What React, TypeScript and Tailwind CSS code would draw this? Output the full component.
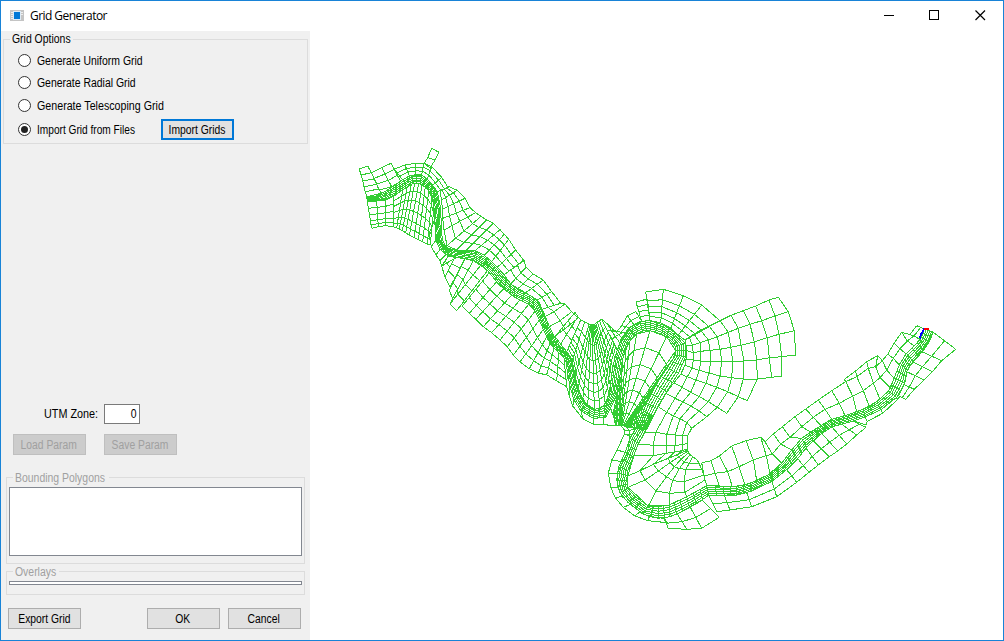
import React from "react";

type Pt = [number, number];
type Rung = Pt[];

/* ---------- mesh helpers ---------- */

const place = (ox: number, oy: number, [x, y]: Pt): Pt => [ox + x / 3, oy + y / 3];

const line = (pts: Pt[]) => "M" + pts.map(([x, y]) => x.toFixed(1) + " " + y.toFixed(1)).join("L");

// Rungs across the patch; nodes with the same index are joined lengthwise.
function grid(ox: number, oy: number, rungs: Rung[]): string {
  const rs = rungs.map((r) => r.map((p) => place(ox, oy, p)));
  let d = rs.map(line).join("");
  for (let i = 1; i < rs.length; i++) {
    const n = Math.min(rs[i].length, rs[i - 1].length);
    for (let j = 0; j < n; j++) d += line([rs[i - 1][j], rs[i][j]]);
  }
  return d;
}

// Straight rungs given as [bankX, bankY, outerX, outerY], split at the fractions.
function fan(ox: number, oy: number, fr: number[], rows: number[][], dense = 1): string {
  const all: number[][] = [];
  rows.forEach((r, i) => {
    all.push(r);
    const next = rows[i + 1];
    if (next) for (let k = 1; k < dense; k++) all.push(r.map((v, c) => v + ((next[c] - v) * k) / dense));
  });
  return grid(
    ox,
    oy,
    all.map(([a, b, c, e]) => fr.map((f): Pt => [a + (c - a) * f, b + (e - b) * f])),
  );
}

const even = (n: number) => Array.from({ length: n + 1 }, (_, i) => i / n);

/* ---------- channel ---------- */

const bed = even(5);

const channel = [
  fan(350, 140, bed, [
    [50, 170, 52, 185], [78, 168, 80, 183], [105, 155, 108, 178], [135, 135, 138, 163], [160, 118, 168, 143],
    [185, 105, 190, 130], [215, 105, 210, 130], [240, 125, 230, 143], [262, 155, 248, 168], [272, 205, 252, 205],
    [274, 260, 256, 260], [277, 300, 260, 305], [290, 323, 270, 328], [320, 333, 295, 347], [350, 333, 335, 354],
    [380, 337, 370, 360], [410, 357, 398, 376], [435, 380, 422, 403], [460, 410, 448, 435], [482, 432, 472, 455],
    [505, 450, 498, 474], [540, 466, 536, 493],
  ], 2),
  fan(430, 230, bed, [
    [300, 196, 296, 223], [327, 217, 310, 233], [342, 250, 328, 270], [356, 285, 344, 308], [372, 320, 360, 340],
    [388, 346, 380, 362], [412, 366, 400, 380], [426, 390, 408, 395], [432, 420, 412, 425], [440, 460, 420, 470],
    [452, 495, 432, 510],
  ], 2),
  fan(550, 280, bed, [
    [92, 345, 72, 360], [110, 373, 93, 393], [135, 388, 130, 415], [162, 378, 168, 412], [180, 335, 200, 345],
    [185, 285, 208, 300], [195, 230, 217, 240], [212, 180, 235, 190], [235, 145, 253, 165], [270, 124, 278, 153],
    [300, 122, 300, 152], [340, 135, 335, 162], [375, 158, 365, 185], [405, 190, 377, 200], [407, 230, 377, 225],
    [385, 280, 350, 265], [350, 335, 318, 315], [320, 385, 290, 368], [298, 430, 270, 420], [290, 450, 262, 445],
  ], 2),
  fan(590, 400, bed, [
    [185, 48, 158, 42], [165, 95, 140, 80], [145, 130, 120, 115], [130, 170, 105, 158], [113, 212, 86, 200],
    [110, 240, 80, 240], [114, 265, 90, 278], [135, 290, 115, 308], [175, 318, 160, 343], [205, 320, 205, 355],
    [237, 315, 240, 350], [270, 300, 278, 334], [310, 280, 318, 312], [350, 257, 356, 286], [400, 259, 403, 286],
    [440, 260, 438, 286], [480, 250, 485, 273], [540, 222, 546, 244],
  ], 2),
  fan(740, 310, bed, [
    [90, 490, 96, 514], [125, 460, 140, 479], [155, 420, 173, 446], [185, 385, 200, 412], [230, 355, 240, 374],
    [270, 330, 278, 349], [320, 315, 326, 337], [370, 298, 375, 321], [410, 275, 423, 299], [446, 243, 470, 262],
    [462, 205, 494, 220], [480, 160, 502, 180], [500, 130, 520, 155], [532, 98, 550, 122], [545, 82, 568, 95],
    [553, 57, 580, 67],
  ], 2),
].join("");

/* ---------- left overbank ---------- */

const leftBank = [
  grid(350, 140, [
    [[50, 170], [46, 155], [42, 140], [38, 122], [33, 105], [28, 87]],
    [[95, 160], [85, 147], [80, 133], [74, 117], [64, 98], [53, 78]],
  ]),
  fan(350, 140, even(3), [[88, 150, 64, 98], [125, 140, 95, 83], [152, 124, 123, 70]]),
  fan(350, 140, even(3), [
    [158, 120, 133, 87], [178, 107, 165, 75], [197, 104, 197, 70], [215, 105, 222, 70], [232, 117, 245, 80],
    [247, 137, 275, 112], [262, 155, 294, 142],
  ]),
  grid(350, 140, [[[222, 70], [233, 53], [245, 25]], [[241, 84], [255, 60], [267, 37]]]),
  fan(425, 180, even(4), [
    [45, 35, 72, 20], [50, 60, 97, 31], [52, 88, 120, 55], [53, 115, 135, 83], [57, 150, 152, 98],
    [66, 197, 168, 109], [95, 210, 185, 120], [125, 210, 205, 130], [150, 212, 225, 149], [178, 226, 238, 163],
    [200, 245, 251, 178], [217, 262, 272, 210], [237, 284, 297, 242],
  ]),
  fan(490, 250, even(3), [
    [42, 74, 102, 30], [62, 102, 108, 52], [84, 116, 130, 72], [107, 128, 160, 90], [142, 150, 185, 125],
    [155, 178, 212, 160],
  ]),
  grid(490, 250, [
    [[155, 178], [174, 172], [212, 160]],
    [[165, 200], [192, 185], [225, 162]],
    [[178, 230], [210, 212], [245, 185]],
    [[193, 260], [225, 236], [264, 205]],
  ]),
  fan(550, 280, [0, 0.1, 0.2, 0.3, 0.42, 0.57, 0.75, 1], [
    [50, 215, 92, 120], [66, 245, 104, 125], [74, 295, 117, 132],
    [84, 330, 121, 132], [98, 360, 123, 132], [113, 380, 125, 132], [133, 388, 126, 132],
    [150, 385, 127, 132], [166, 372, 129, 132], [177, 345, 131, 132], [181, 315, 134, 132],
    [185, 285, 137, 130], [188, 260, 142, 126], [195, 235, 148, 122], [202, 210, 155, 118],
  ]),
  fan(550, 280, [0, 0.35, 0.65, 1], [
    [15, 170, 75, 97], [32, 192, 84, 110], [50, 215, 92, 120],
  ]),
  fan(550, 280, [0, 0.35, 0.65, 1], [
    [202, 210, 155, 118], [210, 190, 170, 130], [218, 175, 185, 145], [228, 158, 200, 155],
  ]),
  fan(550, 280, even(2), [[228, 158, 200, 155], [240, 143, 215, 137], [253, 136, 232, 107], [275, 124, 258, 95]]),
  fan(550, 280, even(4), [[275, 124, 258, 66], [300, 122, 292, 57]]),
  fan(550, 280, [0, 0.15, 0.3, 0.48, 0.69, 1], [
    [300, 122, 287, 36], [332, 128, 340, 28], [362, 145, 400, 47], [385, 165, 455, 75], [405, 180, 510, 122],
  ]),
  grid(660, 280, [
    [[75, 180], [88, 172], [102, 162], [122, 150], [147, 138], [180, 122], [213, 106], [250, 92], [287, 78], [327, 60], [355, 52]],
    [[78, 197], [97, 195], [120, 188], [145, 180], [172, 170], [205, 157], [235, 145], [270, 133], [305, 122], [345, 108], [385, 95]],
    [[80, 212], [100, 218], [122, 214], [150, 211], [180, 208], [212, 202], [243, 196], [283, 186], [322, 173], [357, 163], [403, 152]],
    [[78, 237], [100, 240], [122, 243], [152, 244], [185, 244], [218, 244], [252, 243], [290, 240], [328, 233], [365, 230], [407, 225]],
    [[75, 256], [97, 264], [118, 271], [147, 279], [180, 288], [215, 293], [250, 297], [292, 297], [335, 292], [365, 288]],
    [[62, 283], [82, 290], [108, 300], [138, 310], [170, 322], [203, 335], [235, 350], [262, 362]],
    [[42, 308], [66, 322], [92, 337], [118, 350], [145, 365], [172, 382], [200, 400]],
    [[18, 340], [45, 355], [68, 366], [93, 378], [117, 393], [140, 410]],
    [[-5, 380], [20, 397], [40, 408], [60, 416], [80, 427], [95, 445]],
    [[-45, 457], [-13, 457], [20, 463], [45, 465], [68, 465], [83, 467]],
    [[-65, 492], [-20, 496], [20, 498], [45, 496], [68, 494], [83, 490]],
  ]),
  grid(590, 400, [
    [[132, 167], [190, 167], [228, 160], [253, 156], [276, 152], [293, 147]],
    [[113, 228], [150, 212], [190, 193], [235, 175], [262, 164], [293, 150]],
    [[114, 262], [165, 240], [205, 213], [240, 188], [266, 171], [294, 153]],
    [[175, 318], [198, 273], [230, 230], [253, 200], [273, 178], [296, 158]],
    [[237, 315], [238, 280], [248, 242], [268, 206], [282, 186], [300, 164]],
    [[290, 290], [285, 277], [283, 245], [287, 208], [298, 190], [308, 170]],
    [[350, 257], [345, 240], [342, 225], [335, 208], [328, 192], [322, 180]],
  ]),
  grid(590, 400, [[[190, 136], [190, 167]]]),
  grid(590, 400, [[[230, 138], [228, 160]]]),
  grid(590, 400, [[[255, 136], [253, 156]]]),
  grid(590, 400, [[[278, 134], [276, 152]]]),
  grid(590, 400, [[[293, 130], [293, 147]]]),
  grid(590, 400, [
    [[350, 257], [342, 228], [335, 188]],
    [[388, 258], [375, 220], [363, 182]],
    [[427, 260], [413, 215], [388, 168]],
    [[465, 255], [447, 200], [425, 138]],
    [[500, 242], [490, 180], [468, 122]],
    [[540, 222], [529, 167], [512, 112]],
  ]),
  grid(740, 310, [
    [[90, 492], [79, 437], [62, 382]],
    [[125, 460], [97, 432], [75, 395]],
    [[155, 420], [122, 402], [100, 372]],
    [[185, 385], [150, 382], [127, 350]],
    [[213, 367], [185, 350], [165, 320]],
    [[243, 347], [220, 322], [197, 297]],
    [[275, 328], [255, 298], [235, 270]],
    [[315, 317], [298, 280], [275, 242]],
    [[350, 305], [338, 258], [317, 215]],
    [[388, 290], [370, 242], [350, 200]],
    [[420, 268], [400, 220], [385, 175]],
    [[452, 235], [420, 203], [407, 170]],
    [[462, 205], [440, 180], [427, 152]],
    [[478, 165], [460, 145], [443, 133]],
    [[498, 132], [480, 116], [462, 100]],
    [[523, 108], [502, 93], [485, 67]],
    [[540, 88], [522, 78], [510, 74]],
    [[553, 57], [542, 52], [530, 47]],
  ]),
  grid(740, 310, [
    [[317, 215], [313, 208]], [[350, 200], [347, 183]], [[385, 175], [380, 155]], [[407, 170], [413, 137]], [[427, 152], [427, 152]],
  ]),
].join("");

/* ---------- right overbank ---------- */

const rightBank = [
  fan(350, 140, [0, 0.25, 0.5, 0.73, 0.88, 1], [
    [52, 185, 65, 265], [80, 183, 85, 260], [106, 180, 106, 257], [132, 168, 130, 260],
  ]),
  fan(350, 140, [0, 0.16, 0.34, 0.54, 0.73, 0.88, 1], [
    [132, 168, 130, 260], [158, 150, 140, 264], [172, 140, 148, 267], [184, 133, 157, 272], [194, 130, 167, 278],
    [206, 130, 178, 286], [216, 134, 192, 293], [226, 142, 205, 299], [236, 153, 218, 305], [246, 172, 232, 312],
    [252, 200, 241, 312],
  ]),
  fan(350, 140, even(1), [[254, 240, 238, 278], [258, 300, 244, 320], [270, 328, 258, 345], [288, 343, 270, 362]]),
  fan(430, 230, even(1), [[48, 73, 30, 92], [80, 82, 35, 108]]),
  fan(430, 230, even(2), [[55, 78, 35, 108], [75, 82, 45, 142]]),
  fan(430, 230, even(3), [[75, 82, 45, 142], [105, 86, 60, 172]]),
  fan(430, 230, even(4), [[105, 86, 58, 182], [130, 92, 68, 205], [152, 106, 60, 222], [172, 122, 80, 242]]),
  fan(430, 230, even(4), [
    [178, 128, 97, 228], [200, 155, 118, 250], [222, 175, 137, 268], [245, 195, 160, 290], [270, 210, 185, 308],
  ]),
  fan(430, 230, even(4), [
    [270, 210, 185, 308], [296, 223, 210, 330], [316, 243, 232, 350], [328, 270, 250, 375], [340, 298, 270, 396],
    [350, 320, 298, 416], [360, 340, 325, 430], [372, 354, 350, 434], [387, 368, 380, 453], [402, 385, 410, 470],
  ]),
  fan(550, 280, even(1), [
    [52, 275, 50, 320], [60, 320, 58, 348], [72, 360, 68, 378], [93, 393, 100, 418], [130, 415, 130, 432],
    [160, 413, 160, 434], [180, 380, 200, 437],
  ]),
  fan(550, 280, [0, 0.13, 0.25, 0.37, 0.5, 0.64, 0.82, 1], [
    [196, 436, 190, 395], [200, 436, 198, 360], [204, 436, 203, 320], [207, 436, 210, 285], [209, 436, 217, 240],
    [211, 436, 228, 205], [213, 436, 240, 182], [215, 436, 260, 162], [217, 436, 300, 152],
    [220, 437, 350, 170], [222, 437, 377, 212], [223, 438, 370, 235], [225, 438, 350, 265], [226, 438, 334, 290],
    [228, 439, 318, 315], [229, 440, 305, 342], [230, 440, 290, 368], [231, 441, 280, 395], [232, 442, 270, 420],
    [233, 443, 262, 445],
  ]),
  grid(590, 400, [
    [[92, 76], [108, 78], [125, 80]],
    [[103, 90], [118, 92], [138, 84]],
    [[103, 102], [118, 103], [128, 104]],
  ]),
  fan(590, 400, even(1), [
    [120, 108, 103, 102], [113, 160, 82, 150], [98, 185, 65, 180], [82, 222, 55, 220], [84, 262, 62, 262],
    [97, 290, 75, 292], [122, 313, 100, 322], [150, 335, 135, 348], [178, 350, 173, 362], [222, 355, 232, 368],
  ]),
  fan(590, 400, even(2), [
    [222, 355, 235, 385], [262, 342, 290, 388], [300, 320, 335, 385], [335, 300, 388, 352],
  ]),
  fan(590, 400, even(2), [
    [356, 286, 380, 335], [403, 286, 420, 330], [470, 278, 485, 320], [546, 244, 560, 290], [590, 208, 620, 247],
  ]),
  fan(740, 310, even(2), [
    [140, 479, 170, 517], [173, 446, 207, 487], [198, 414, 235, 465], [220, 392, 268, 440], [245, 370, 293, 423],
    [275, 350, 320, 402], [305, 343, 350, 375], [340, 333, 378, 352],
  ]),
  fan(740, 310, even(1), [[340, 333, 378, 345], [375, 321, 382, 334], [423, 299, 428, 310], [460, 268, 480, 262]]),
  fan(740, 310, even(2), [
    [476, 258, 497, 268], [492, 224, 523, 238], [500, 185, 552, 210], [518, 155, 577, 185], [545, 125, 605, 152],
    [580, 67, 647, 118],
  ]),
].join("");

function Mesh() {
  return (
    <svg className="block h-[607px] w-[693px]" viewBox="310 31 693 607" fill="none" shapeRendering="crispEdges">
      <g stroke="#32cd32" strokeWidth="1">
        <path d={leftBank} />
        <path d={rightBank} />
        <path d={channel} />
      </g>
      <path d="M919.5 338.5L921.5 333.5L924.5 328.5" stroke="#0000ff" strokeWidth="2" />
      <path d="M924 329H928.5" stroke="#ff0000" strokeWidth="2" />
    </svg>
  );
}

/* ---------- controls ---------- */

function Button({ label, className }: { label: string; className: string }) {
  return (
    <button className={"flex h-[21px] w-[73px] items-center justify-center border whitespace-nowrap " + className}>
      <span className="-ml-px scale-x-[0.86]">{label}</span>
    </button>
  );
}

const normal = "border-[#adadad] bg-[#e1e1e1]";
const disabled = "border-[#bfbfbf] bg-[#cccccc] text-[#a0a0a0]";

function Group({ label, mask, className, children }: { label: string; mask: string; className: string; children: React.ReactNode }) {
  return (
    <section className={"relative border border-[#dcdcdc] " + className}>
      <span className={"absolute left-[6px] h-[15px] bg-[#f0f0f0] pl-[2px] leading-[15px] whitespace-nowrap " + mask}>
        <span className="inline-block origin-left scale-x-[0.87]">{label}</span>
      </span>
      {children}
    </section>
  );
}

function Radio({ label, checked, className, stretch }: { label: string; checked?: boolean; className?: string; stretch?: string }) {
  return (
    <label className={"flex h-[13px] items-center gap-[6px] whitespace-nowrap " + (className ?? "")}>
      <span className="flex size-[13px] shrink-0 items-center justify-center rounded-full border border-[#333] bg-white">
        {checked && <span className="size-[7px] rounded-full bg-[#222]" />}
      </span>
      <span className={"origin-left " + (stretch ?? "scale-x-[0.87]")}>{label}</span>
    </label>
  );
}

export default function App() {
  return (
    <div className="flex h-[641px] w-[1004px] flex-col overflow-hidden border border-[#1883d7] bg-white font-['Liberation_Sans',Arial,sans-serif] text-[12px] text-black">
      <header className="flex h-[30px] items-center">
        <svg className="mb-[2px] ml-[9px] h-[11px] w-[14px]" viewBox="0 0 14 11" shapeRendering="crispEdges">
          <rect width="14" height="11" fill="#c4c4c4" />
          <path d="M1 2H3M1 4H3M1 6H3M1 8H3M11 2H13M11 4H13" stroke="#eee" />
          <rect x="3" y="1" width="8" height="9" fill="#dceaf6" />
          <rect x="4" y="2" width="6" height="7" fill="#0078d7" />
        </svg>
        <h1 className="ml-[6px] font-['Open_Sans',sans-serif] text-[12px] tracking-[-0.55px]">Grid Generator</h1>
        <div className="mr-[17px] mb-[2px] ml-auto flex items-center gap-[35px]">
          <svg className="h-[11px] w-[10px]" viewBox="0 0 10 11" shapeRendering="crispEdges"><path d="M0 5.5H10" stroke="#000" /></svg>
          <svg className="size-[11px]" viewBox="0 0 11 11" shapeRendering="crispEdges"><path d="M.5 .5H9.5V9.5H.5Z" stroke="#000" fill="none" /></svg>
          <svg className="size-[11px]" viewBox="0 0 11 11"><path d="M.5 .5L10 10M10 .5L.5 10" stroke="#000" strokeWidth="1.2" /></svg>
        </div>
      </header>
      <main className="flex min-h-0 flex-1">
        <aside className="flex w-[309px] flex-col bg-[#f0f0f0]">
          <Group label="Grid Options" mask="-top-[8px] w-[63px]" className="mt-[8px] ml-[2px] h-[105px] w-[305px]">
            <div className="flex flex-col pt-[14px] pl-[14px]">
              <Radio label="Generate Uniform Grid" />
              <Radio label="Generate Radial Grid" className="mt-[9px]" />
              <Radio label="Generate Telescoping Grid" className="mt-[10px]" stretch="scale-x-[0.89]" />
              <div className="mt-[7px] flex items-center">
                <Radio label="Import Grid from Files" checked className="w-[143px]" stretch="scale-x-[0.845]" />
                <Button label="Import Grids" className="border-2 border-[#0078d7] bg-[#e1e1e1]" />
              </div>
            </div>
          </Group>
          <div className="mt-[260px] ml-[43px] flex h-[20px] items-center">
            <span className="w-[60px] origin-left scale-x-[0.9] whitespace-nowrap">UTM Zone:</span>
            <span className="flex h-[20px] w-[36px] items-center justify-end border border-[#7a7a7a] bg-white pr-[2px]">
              <span className="origin-right scale-x-[0.87]">0</span>
            </span>
          </div>
          <div className="mt-[10px] ml-[12px] flex gap-[18px]">
            <Button label="Load Param" className={disabled} />
            <Button label="Save Param" className={disabled} />
          </div>
          <Group label="Bounding Polygons" mask="-top-[7px] w-[96px]" className="mt-[22px] ml-[5px] h-[87px] w-[299px] text-[#a0a0a0]">
            <div className="mt-[9px] ml-[2px] h-[69px] w-[293px] border border-[#828790] bg-white" />
          </Group>
          <Group label="Overlays" mask="-top-[7px] w-[46px]" className="mt-[7px] ml-[5px] h-[24px] w-[299px] text-[#a0a0a0]">
            <div className="mt-[9px] ml-[2px] h-[4px] w-[293px] border border-[#828790] bg-white" />
          </Group>
          <div className="mt-[13px] ml-[7px] flex">
            <Button label="Export Grid" className={normal} />
            <Button label="OK" className={normal + " ml-[66px]"} />
            <Button label="Cancel" className={normal + " ml-[8px]"} />
          </div>
        </aside>
        <Mesh />
      </main>
    </div>
  );
}
